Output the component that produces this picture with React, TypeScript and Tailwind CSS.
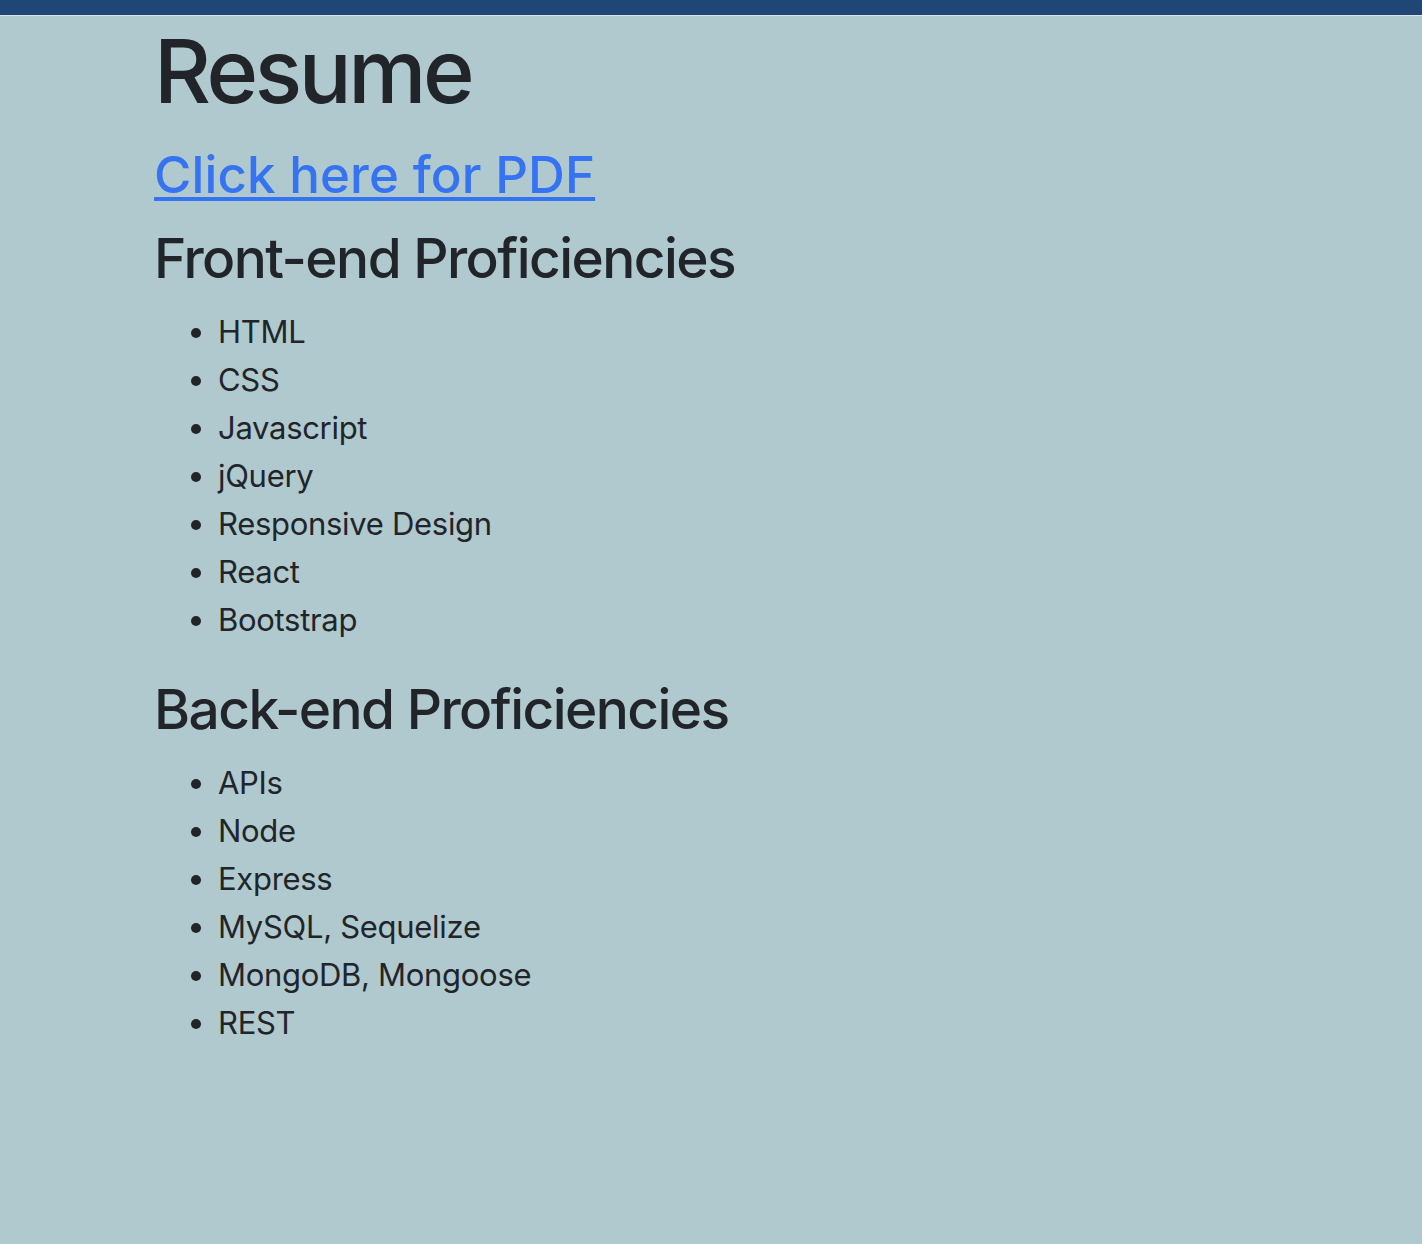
const frontEnd = ["HTML", "CSS", "Javascript", "jQuery", "Responsive Design", "React", "Bootstrap"];
const backEnd = ["APIs", "Node", "Express", "MySQL, Sequelize", "MongoDB, Mongoose", "REST"];

function SkillList({ items }: { items: string[] }) {
  return (
    <ul className="list-disc pl-16 mt-[17px] mb-8 text-[31px] leading-[48px] tracking-[-0.3px]">
      {items.map((item) => (
        <li key={item}>{item}</li>
      ))}
    </ul>
  );
}

export default function App() {
  return (
    <div
      className="min-h-screen bg-[#b0c9ce] text-[#212529]"
      style={{ fontFamily: "Inter, 'Noto Sans', sans-serif" }}
    >
      {/* Top nav strip */}
      <nav className="h-4 bg-[#1f4677] border-b border-[#dfe3e6]" />

      <main className="pl-[154px] pr-6 pt-[3px]">
        <h1 className="text-[88px] leading-[1.2] font-medium tracking-[-3.4px]">Resume</h1>
        <h3 className="mt-[19px] text-[51px] leading-[1.2] font-medium tracking-[0.1px]">
          <a
            href="#"
            className="text-[#3573f2] underline decoration-[4px] underline-offset-[4px]"
          >
            Click here for PDF
          </a>
        </h3>

        <h2 className="mt-5 text-[55px] leading-[1.2] font-medium tracking-[-1.55px]">
          Front-end Proficiencies
        </h2>
        <SkillList items={frontEnd} />

        <h2 className="text-[55px] leading-[1.2] font-medium tracking-[-1.55px]">
          Back-end Proficiencies
        </h2>
        <SkillList items={backEnd} />
      </main>
    </div>
  );
}
